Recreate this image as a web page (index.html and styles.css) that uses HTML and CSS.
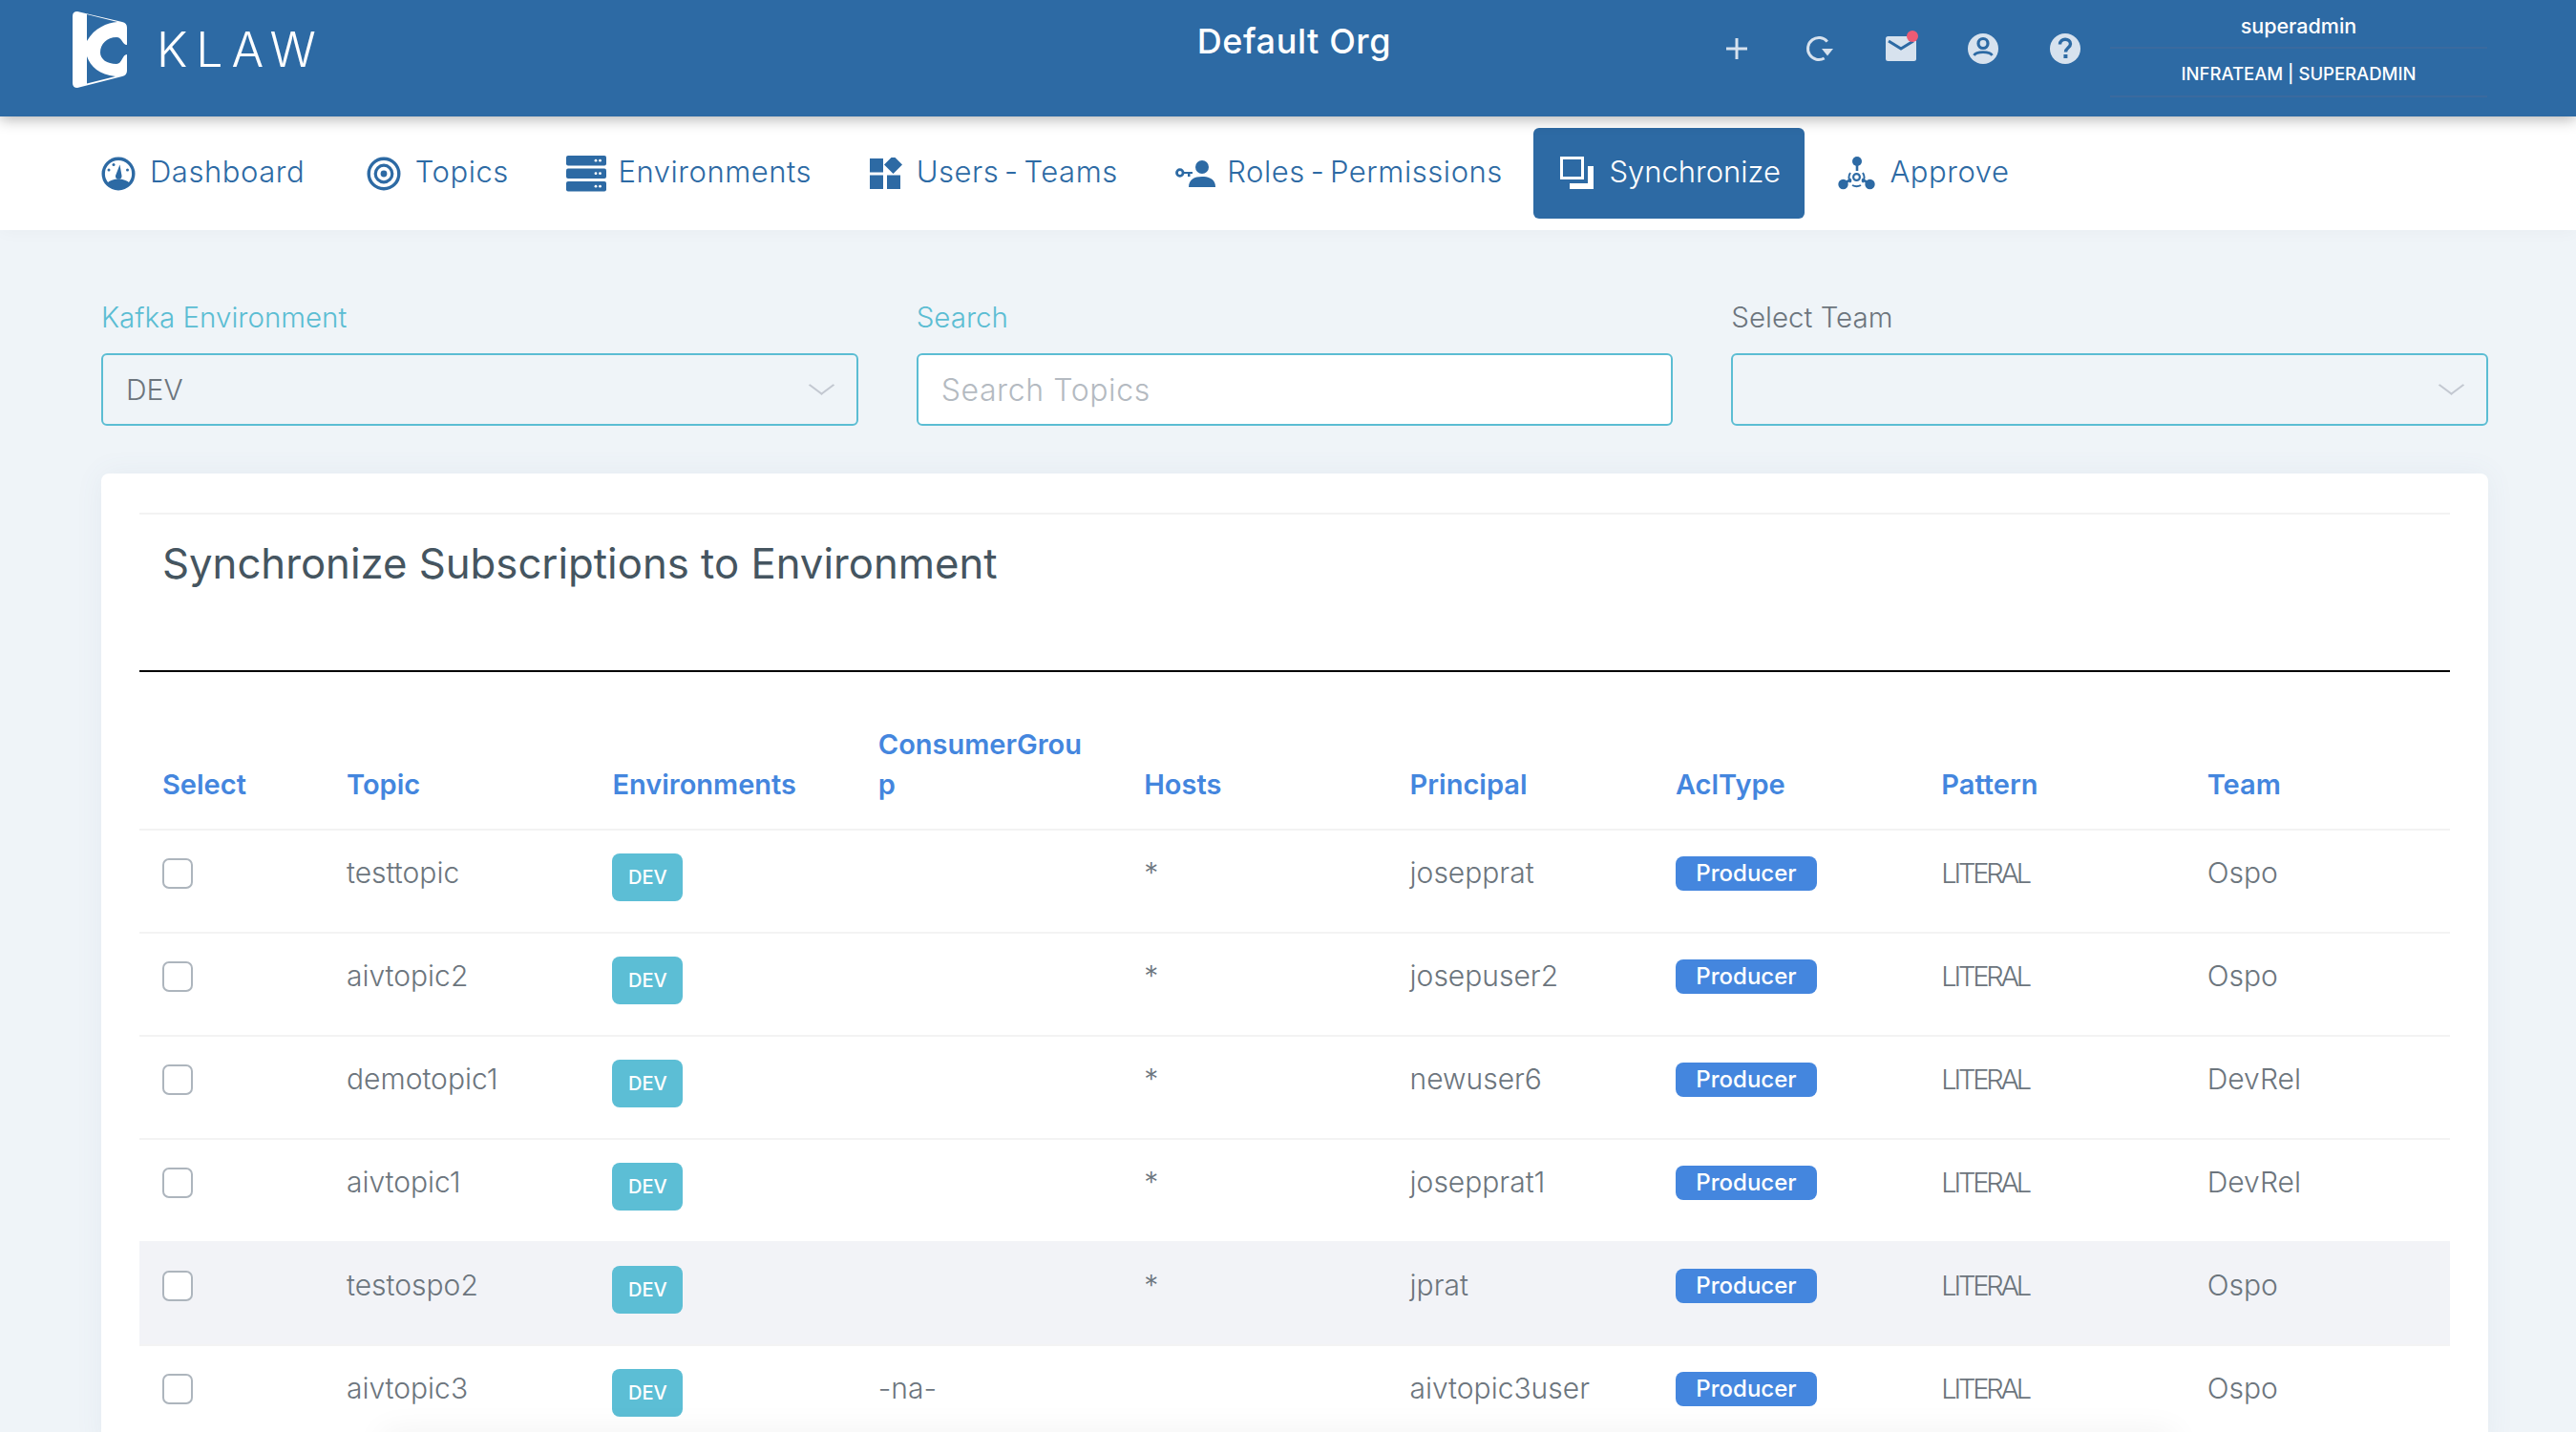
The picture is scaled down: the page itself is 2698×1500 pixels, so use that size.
FILE: index.html
```html
<!DOCTYPE html>
<html lang="en">
<head>
  <meta charset="UTF-8" />
  <title>Klaw - Synchronize Subscriptions</title>
  <link rel="stylesheet" href="styles.css">
</head>
<body>
  <header class="topbar">
    <div class="topbar-left">
      <a class="brand">
        <svg class="brand-logo" viewBox="0 0 57 80">
          <path fill="#fff" d="M5 0 L52 11 Q57 12 57 17 L57 62 Q57 67 52 68 L5 80 Q0 80 0 75 L0 5 Q0 0 5 0 Z"/>
          <path fill="#2d6aa4" d="M15 3 L47 11 C36 12 23 17 15 31 Z"/>
          <path fill="#2d6aa4" d="M57 35 C52 35 52 27 46 27 C36 27 29 34 29 43 C29 50 36 55 46 55 C52 55 52 45 57 45 Z"/>
          <path fill="#2d6aa4" d="M15 47 C19 58 28 66 45 68 L15 75.5 Z"/>
        </svg>
        <span class="brand-name">KLAW</span>
      </a>
      <div class="org-name">Default Org</div>
    </div>
    <div class="topbar-icons">
      <svg class="tb-icon" viewBox="0 0 40 40"><path d="M20 9 V31 M9 20 H31" stroke="#d7e2ee" stroke-width="3" fill="none"/></svg>
      <svg class="tb-icon" viewBox="0 0 40 40"><path d="M28.8 12.6 A11.5 11.5 0 1 0 25.7 30" stroke="#d7e2ee" stroke-width="3" fill="none"/><path d="M23 20 L35 20 L29 27.5 Z" fill="#d7e2ee"/></svg>
      <div class="mail-wrap">
        <svg class="tb-icon" viewBox="0 0 40 40"><rect x="4" y="7" width="32" height="26" rx="2.5" fill="#d7e2ee"/><path d="M7 12 L20 20 L33 12" stroke="#2d6aa4" stroke-width="3" fill="none"/></svg>
        <span class="mail-dot"></span>
      </div>
      <svg class="tb-icon" viewBox="0 0 40 40"><circle cx="20" cy="20" r="16" fill="#d7e2ee"/><circle cx="20" cy="14.5" r="5" fill="#d7e2ee" stroke="#2d6aa4" stroke-width="3.2"/><path d="M10.5 27 C13 22.5 27 22.5 29.5 27" fill="none" stroke="#2d6aa4" stroke-width="2.8"/></svg>
      <svg class="tb-icon" viewBox="0 0 40 40"><circle cx="20" cy="20" r="16" fill="#d7e2ee"/><path d="M14.5 15.5 C14.5 8.5 25.5 8.5 25.5 15 C25.5 19 20.5 19 20.5 23.5" fill="none" stroke="#2d6aa4" stroke-width="3.4"/><rect x="18.4" y="26" width="4" height="4" fill="#2d6aa4"/></svg>
    </div>
    <div class="user-box">
      <div class="user-line user-name">superadmin</div>
      <div class="user-line user-team">INFRATEAM | SUPERADMIN</div>
    </div>
  </header>

  <nav class="mainnav">
    <a class="nav-item">
      <svg class="nav-icon" width="36" height="36" viewBox="0 0 36 36"><circle cx="18" cy="18" r="15.8" fill="none" stroke="#2d6aa4" stroke-width="3.4"/><path d="M6 28 C11 22 25 22 30 28 C26 34 10 34 6 28 Z" fill="#2d6aa4"/><path d="M15 20 L19.5 8.5 L21.5 20 A3.3 3.3 0 1 1 15 20 Z" fill="#2d6aa4"/><circle cx="8" cy="14" r="1.5" fill="#2d6aa4"/><circle cx="13" cy="8.5" r="1.5" fill="#2d6aa4"/><circle cx="27.5" cy="14" r="1.5" fill="#2d6aa4"/></svg>
      <span>Dashboard</span>
    </a>
    <a class="nav-item">
      <svg class="nav-icon" width="36" height="36" viewBox="0 0 36 36"><circle cx="18" cy="18" r="15.8" fill="none" stroke="#2d6aa4" stroke-width="3.4"/><circle cx="18" cy="18" r="8.8" fill="none" stroke="#2d6aa4" stroke-width="3.2"/><circle cx="18" cy="18" r="3.4" fill="#2d6aa4"/></svg>
      <span>Topics</span>
    </a>
    <a class="nav-item">
      <svg class="nav-icon nav-icon-tight" width="42" height="38" viewBox="0 0 42 38"><g fill="#2d6aa4"><rect width="42" height="10.5" rx="2"/><rect y="13.5" width="42" height="10.5" rx="2"/><rect y="27" width="42" height="10.5" rx="2"/></g><g fill="#fff"><circle cx="31" cy="5.2" r="1.4"/><circle cx="35.5" cy="5.2" r="1.4"/><circle cx="31" cy="18.7" r="1.4"/><circle cx="35.5" cy="18.7" r="1.4"/><circle cx="31" cy="32.2" r="1.4"/><circle cx="35.5" cy="32.2" r="1.4"/></g></svg>
      <span>Environments</span>
    </a>
    <a class="nav-item">
      <svg class="nav-icon" width="34" height="33" viewBox="0 0 34 33"><g fill="#2d6aa4"><rect y="1" width="14" height="14.5"/><rect y="18.5" width="14" height="14.5"/><rect x="18" y="18.5" width="14" height="14.5"/><path d="M24.5 -2 L34 7.5 L24.5 17 L15 7.5 Z"/></g></svg>
      <span>Users - Teams</span>
    </a>
    <a class="nav-item">
      <svg class="nav-icon nav-icon-tight" width="42" height="28" viewBox="0 0 42 28"><circle cx="4.8" cy="13" r="3.3" fill="none" stroke="#2d6aa4" stroke-width="2.8"/><path d="M8 12 H18 V14 H15.5 V17 H13 V14 H8 Z" fill="#2d6aa4"/><circle cx="28" cy="7" r="7" fill="#2d6aa4"/><path d="M14 28 C14 20 20 17 28 17 C36 17 42 20 42 28 Z" fill="#2d6aa4"/></svg>
      <span>Roles - Permissions</span>
    </a>
    <a class="nav-item nav-item-active">
      <svg class="nav-icon" width="36" height="35" viewBox="0 0 36 35"><rect x="1.5" y="1.5" width="22" height="21" fill="none" stroke="#fff" stroke-width="3"/><path d="M29 10 H35 V34 H10 V28 H29 Z" fill="#fff"/></svg>
      <span>Synchronize</span>
    </a>
    <a class="nav-item">
      <svg class="nav-icon" width="39" height="36" viewBox="0 0 39 36"><g fill="#2d6aa4"><circle cx="20" cy="5" r="5"/><circle cx="5.5" cy="29" r="5.2"/><circle cx="33.5" cy="29" r="5.2"/></g><path d="M20 8 V15 M8 27 L14 24 M31 27 L25 24" stroke="#2d6aa4" stroke-width="2.6" fill="none"/><circle cx="19.5" cy="21.5" r="3.4" fill="none" stroke="#2d6aa4" stroke-width="2.2"/><path d="M13 17 A8.5 8.5 0 0 0 13.5 27 M26 17 A8.5 8.5 0 0 1 25.5 27 M15 30 A9 9 0 0 0 24 30" stroke="#2d6aa4" stroke-width="2" fill="none"/></svg>
      <span>Approve</span>
    </a>
  </nav>

  <main class="content">
    <div class="filters">
      <div class="filter">
        <label class="filter-label">Kafka Environment</label>
        <div class="field field-select">DEV</div>
      </div>
      <div class="filter">
        <label class="filter-label">Search</label>
        <input class="field field-input" type="text" placeholder="Search Topics">
      </div>
      <div class="filter">
        <label class="filter-label filter-label-plain">Select Team</label>
        <div class="field field-select"></div>
      </div>
    </div>

    <section class="card">
      <div class="card-head">
        <h2 class="card-title">Synchronize Subscriptions to Environment</h2>
      </div>
      <div class="card-rule"></div>
      <table class="sync-table">
        <thead>
          <tr>
            <th class="col-select">Select</th>
            <th>Topic</th>
            <th>Environments</th>
            <th>ConsumerGrou<br>p</th>
            <th>Hosts</th>
            <th>Principal</th>
            <th>AclType</th>
            <th>Pattern</th>
            <th>Team</th>
          </tr>
        </thead>
        <tbody>
          <tr>
            <td><span class="check"></span></td><td>testtopic</td><td><span class="badge-env">DEV</span></td><td></td><td>*</td><td>josepprat</td><td><span class="badge-acl">Producer</span></td><td class="cell-pattern">LITERAL</td><td>Ospo</td>
          </tr>
          <tr>
            <td><span class="check"></span></td><td>aivtopic2</td><td><span class="badge-env">DEV</span></td><td></td><td>*</td><td>josepuser2</td><td><span class="badge-acl">Producer</span></td><td class="cell-pattern">LITERAL</td><td>Ospo</td>
          </tr>
          <tr>
            <td><span class="check"></span></td><td>demotopic1</td><td><span class="badge-env">DEV</span></td><td></td><td>*</td><td>newuser6</td><td><span class="badge-acl">Producer</span></td><td class="cell-pattern">LITERAL</td><td>DevRel</td>
          </tr>
          <tr>
            <td><span class="check"></span></td><td>aivtopic1</td><td><span class="badge-env">DEV</span></td><td></td><td>*</td><td>josepprat1</td><td><span class="badge-acl">Producer</span></td><td class="cell-pattern">LITERAL</td><td>DevRel</td>
          </tr>
          <tr class="row-hover">
            <td><span class="check"></span></td><td>testospo2</td><td><span class="badge-env">DEV</span></td><td></td><td>*</td><td>jprat</td><td><span class="badge-acl">Producer</span></td><td class="cell-pattern">LITERAL</td><td>Ospo</td>
          </tr>
          <tr>
            <td><span class="check"></span></td><td>aivtopic3</td><td><span class="badge-env">DEV</span></td><td>-na-</td><td></td><td>aivtopic3user</td><td><span class="badge-acl">Producer</span></td><td class="cell-pattern">LITERAL</td><td>Ospo</td>
          </tr>
        </tbody>
      </table>
    </section>
  </main>
  <div class="below-fold"></div>
</body>
</html>
```

FILE: styles.css
```css
html, body {
  height: 100%;
  overflow: hidden;
}
body {
  margin: 0;
  background: #eff4f8;
  font-family: Inter, "Open Sans", sans-serif;
  font-weight: 300;
  color: #6c757d;
}
.topbar {
  position: relative;
  z-index: 2;
  display: flex;
  height: 122px;
  background: #2d6aa4;
  box-shadow: 0 3px 14px rgba(0,0,0,0.3);
  color: #fff;
}
.topbar-left {
  display: flex;
  width: 1799px;
  box-sizing: border-box;
  padding-left: 76px;
}
.brand {
  display: flex;
  gap: 31px;
  padding-top: 12px;
}
.brand-logo {
  width: 57px;
  height: 80px;
}
.brand-name {
  font-size: 50px;
  line-height: 80px;
  font-weight: 300;
  letter-spacing: 9px;
}
.org-name {
  flex: 1;
  padding: 18px 0 0 572px;
  text-align: center;
  font-size: 36px;
  line-height: 50px;
  font-weight: 500;
  letter-spacing: 0.6px;
}
.topbar-icons {
  display: flex;
  gap: 46px;
  padding-top: 31px;
  height: 40px;
}
.tb-icon {
  display: block;
  width: 40px;
  height: 40px;
}
.mail-wrap {
  position: relative;
  width: 40px;
  height: 40px;
}
.mail-dot {
  position: absolute;
  top: 1px;
  right: 2px;
  width: 12px;
  height: 12px;
  border-radius: 50%;
  background: #ec5b74;
}
.user-box {
  width: 395px;
  margin-left: 27px;
  font-weight: 500;
  text-align: center;
}
.user-line {
  height: 49px;
  border-bottom: 2px solid #3a6a9f;
}
.user-name {
  font-size: 21.5px;
  line-height: 54px;
}
.user-team {
  font-size: 18.5px;
  line-height: 52px;
}
.mainnav {
  position: relative;
  z-index: 1;
  display: flex;
  align-items: center;
  gap: 7.5px;
  height: 119px;
  padding-left: 78px;
  background: #fff;
  box-shadow: 0 2px 16px rgba(0,0,0,0.03);
  font-size: 31px;
  letter-spacing: 0.55px;
  word-spacing: -3.5px;
  color: #2d6aa4;
}
.nav-item {
  display: flex;
  align-items: center;
  gap: 15px;
  height: 95px;
  padding: 0 25px 0 28px;
  border-radius: 6px;
}
.nav-item:first-child {
  margin-right: 4px;
}
.nav-item span {
  margin-top: -5px;
}
.nav-item-active {
  background: #2d6aa4;
  color: #fff;
  letter-spacing: 0;
}
.nav-icon {
  flex: none;
}
.nav-icon-tight {
  margin-right: -3px;
}
.content {
  padding: 69px 92px 0 106px;
}
.filters {
  display: grid;
  grid-template-columns: repeat(3, 1fr);
  gap: 61px;
}
.filter-label {
  display: block;
  margin-bottom: 15px;
  font-size: 29.5px;
  line-height: 45px;
  color: #5bbdd3;
}
.filter-label-plain {
  color: #6c757d;
}
.field {
  display: block;
  box-sizing: border-box;
  width: 100%;
  height: 76px;
  padding: 0 24px;
  border: 2px solid #5bbdd3;
  border-radius: 6px;
  font: inherit;
  font-size: 30px;
  line-height: 72px;
  color: #6c757d;
}
.field-input {
  background: #fff;
  outline: none;
  font-size: 32px;
  letter-spacing: 0.6px;
}
.field-input::placeholder {
  color: #b4bac1;
}
.field-select {
  position: relative;
}
.field-select::after {
  content: "";
  position: absolute;
  top: 23px;
  right: 28px;
  width: 15px;
  height: 15px;
  border-right: 2px solid #c3c8d1;
  border-bottom: 2px solid #c3c8d1;
  transform: rotate(45deg) skew(-8deg, -8deg);
}
.card {
  margin-top: 50px;
  padding: 41px 40px 0;
  background: #fff;
  border-radius: 8px;
  box-shadow: 0 0 30px rgba(90,120,160,0.07);
}
.card-head {
  border-top: 2px solid #f3f3f3;
  padding: 22px 24px 81px;
}
.card-title {
  margin: 0;
  font-size: 43.7px;
  line-height: 60px;
  font-weight: 400;
  color: #455560;
}
.card-rule {
  height: 2px;
  background: #000;
}
.sync-table {
  width: 2420px;
  margin-top: 31px;
  table-layout: fixed;
  border-collapse: collapse;
  font-size: 30px;
  line-height: 45px;
}
.sync-table th {
  box-sizing: border-box;
  width: 278.4px;
  padding: 24px 24px 25px;
  text-align: left;
  vertical-align: bottom;
  font-size: 29px;
  line-height: 42px;
  font-weight: 600;
  color: #4486de;
}
.sync-table th.col-select {
  width: 193px;
}
.sync-table td {
  height: 108px;
  box-sizing: border-box;
  padding: 22px 24px 0;
  border-top: 2px solid #f3f3f3;
  vertical-align: top;
  white-space: nowrap;
}
.sync-table .row-hover td {
  background: #f2f3f7;
  border-top-color: #f2f3f7;
}
.sync-table .cell-pattern {
  font-size: 29px;
  letter-spacing: -3.2px;
}
.check {
  display: block;
  box-sizing: border-box;
  width: 32px;
  height: 32px;
  margin-top: 7px;
  background: #fff;
  border: 2px solid #adb5bd;
  border-radius: 7px;
}
.badge-env {
  display: block;
  width: 74px;
  height: 50px;
  margin-top: 2px;
  background: #5cbed5;
  border-radius: 8px;
  text-align: center;
  font-size: 20px;
  line-height: 50px;
  font-weight: 500;
  color: #fff;
}
.badge-acl {
  display: block;
  width: 148px;
  height: 36px;
  margin-top: 5px;
  background: #4486de;
  border-radius: 8px;
  text-align: center;
  font-size: 24px;
  line-height: 36px;
  font-weight: 500;
  color: #fff;
}
.below-fold {
  position: fixed;
  left: 400px;
  right: 420px;
  bottom: -30px;
  height: 30px;
  box-shadow: 0 0 34px rgba(0,0,0,0.06);
}
```
